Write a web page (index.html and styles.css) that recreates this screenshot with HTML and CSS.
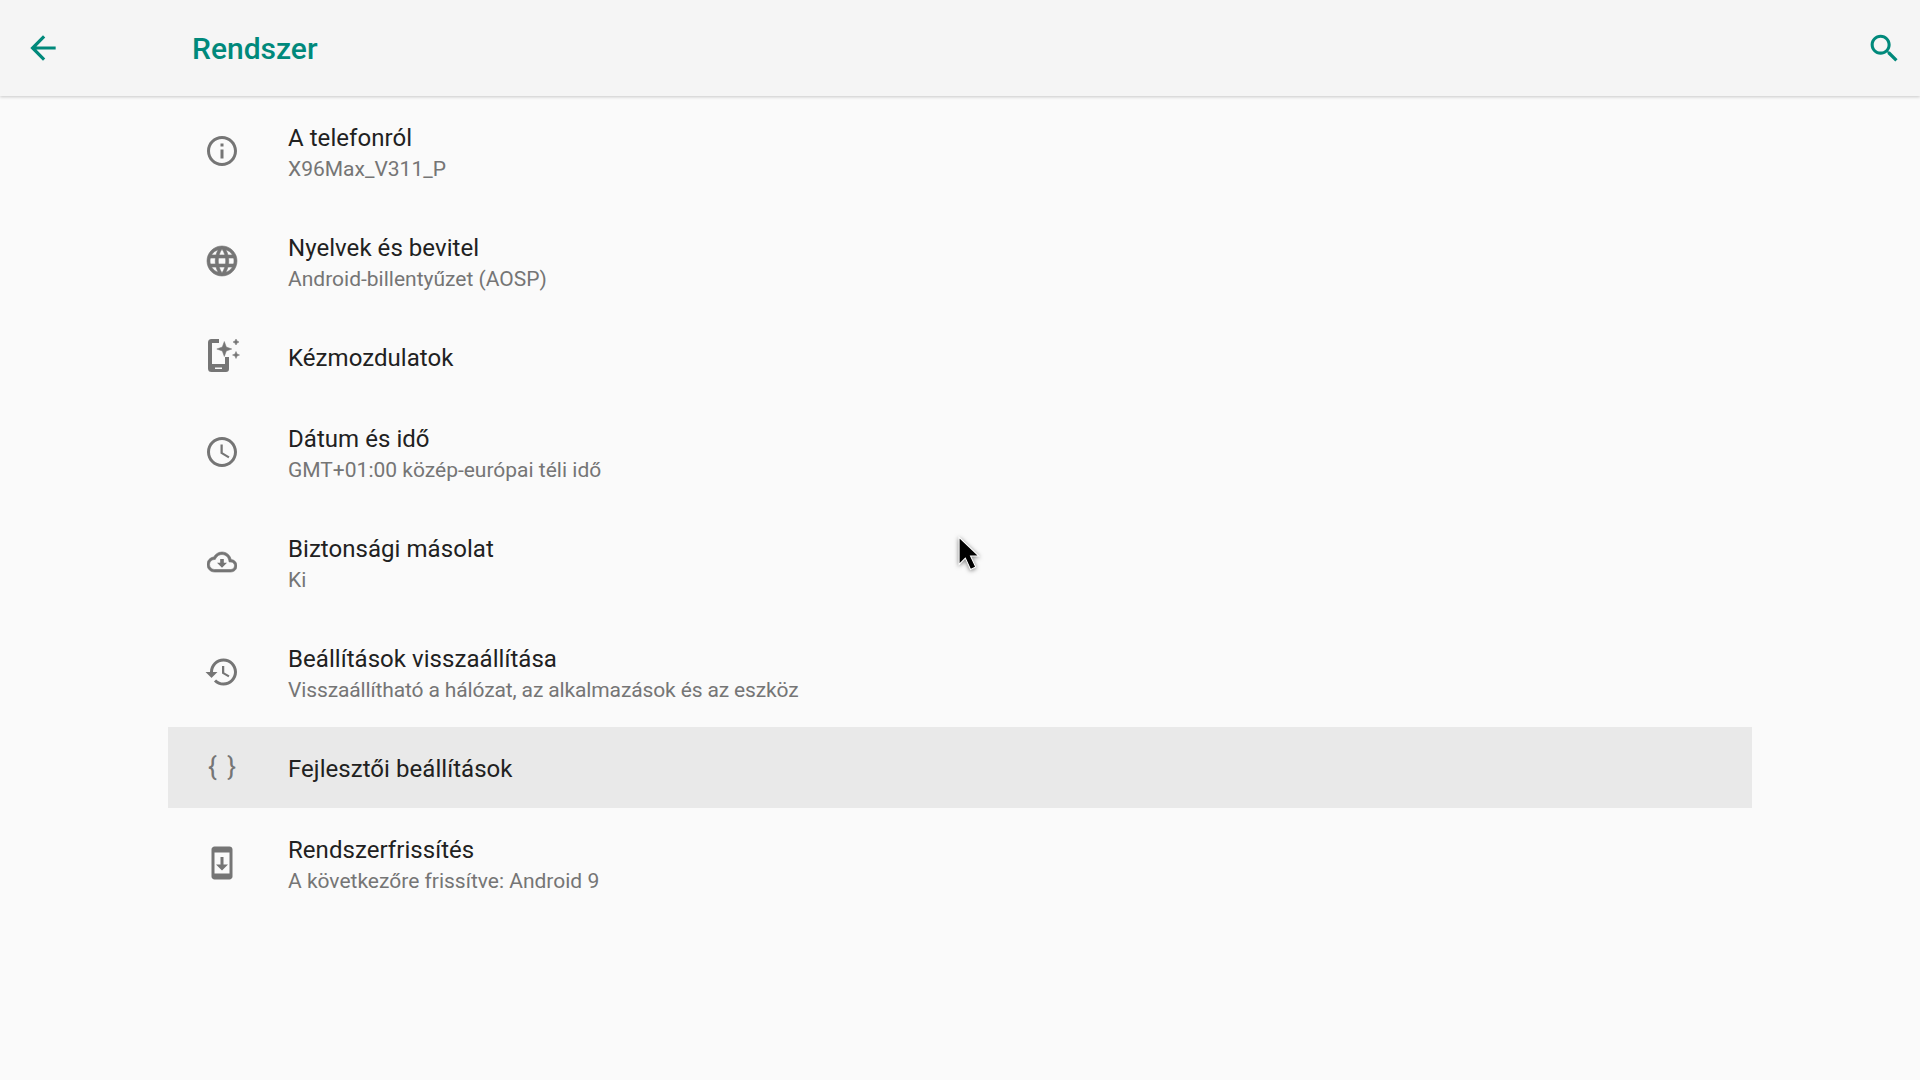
FILE: index.html
```html
<!doctype html>
<html>
    <head>
        <title>Rendszer</title>
        <meta charset="UTF-8">
        <link rel="stylesheet" href="styles.css">
    </head>

    <body>
        <!--Header Start-->
        <header class="appbar">
            <svg class="back" viewBox="0 0 24 24"><path d="M20 11H7.83l5.59-5.59L12 4l-8 8 8 8 1.41-1.41L7.83 13H20v-2z"/></svg>
            <h1 class="page-title">Rendszer</h1>
            <svg class="search" viewBox="0 0 24 24"><path d="M15.5 14h-.79l-.28-.27C15.41 12.59 16 11.11 16 9.5 16 5.91 13.09 3 9.5 3S3 5.91 3 9.5 5.91 16 9.5 16c1.61 0 3.09-.59 4.23-1.57l.27.28v.79l5 4.99L20.49 19l-4.99-5zm-6 0C7.01 14 5 11.99 5 9.5S7.01 5 9.5 5 14 7.01 14 9.5 11.99 14 9.5 14z"/></svg>
        </header>
        <!--Header End-->

        <!--List Start-->
        <section class="list">
            <div class="row">
                <div class="icon">
                    <svg viewBox="0 0 24 24"><path d="M11 7h2v2h-2zm0 4h2v6h-2zm1-9C6.48 2 2 6.48 2 12s4.48 10 10 10 10-4.48 10-10S17.52 2 12 2zm0 18c-4.41 0-8-3.59-8-8s3.59-8 8-8 8 3.59 8 8-3.59 8-8 8z"/></svg>
                </div>
                <div class="text">
                    <h2 class="title">A telefonról</h2>
                    <p class="sub">X96Max_V311_P</p>
                </div>
            </div>
            <div class="row">
                <div class="icon">
                    <svg viewBox="0 0 24 24"><path d="M11.99 2C6.47 2 2 6.48 2 12s4.47 10 9.99 10C17.52 22 22 17.52 22 12S17.52 2 11.99 2zm6.93 6h-2.95c-.32-1.25-.78-2.45-1.38-3.56 1.84.63 3.37 1.91 4.33 3.56zM12 4.04c.83 1.2 1.48 2.53 1.91 3.96h-3.82c.43-1.43 1.08-2.76 1.91-3.96zM4.26 14C4.1 13.36 4 12.69 4 12s.1-1.36.26-2h3.38c-.08.66-.14 1.32-.14 2 0 .68.06 1.34.14 2H4.26zm.82 2h2.95c.32 1.25.78 2.45 1.38 3.56-1.84-.63-3.37-1.9-4.33-3.56zm2.95-8H5.08c.96-1.66 2.49-2.93 4.33-3.56C8.81 5.55 8.35 6.75 8.03 8zM12 19.96c-.83-1.2-1.48-2.53-1.91-3.96h3.82c-.43 1.43-1.08 2.76-1.91 3.96zM14.34 14H9.66c-.09-.66-.16-1.32-.16-2 0-.68.07-1.35.16-2h4.68c.09.65.16 1.32.16 2 0 .68-.07 1.34-.16 2zm.25 5.56c.6-1.11 1.06-2.31 1.38-3.56h2.95c-.96 1.65-2.49 2.93-4.33 3.56zM16.36 14c.08-.66.14-1.32.14-2 0-.68-.06-1.34-.14-2h3.38c.16.64.26 1.31.26 2s-.1 1.36-.26 2h-3.38z" stroke="#757575" stroke-width=".4"/></svg>
                </div>
                <div class="text">
                    <h2 class="title">Nyelvek és bevitel</h2>
                    <p class="sub">Android-billentyűzet (AOSP)</p>
                </div>
            </div>
            <div class="row single">
                <div class="icon">
                    <svg viewBox="0 0 36 36"><path d="M7.500 0H15v4H8v21h13V18h4v12a3 3 0 0 1-3 3H7.500a3.500 3.500 0 0 1-3.500-3.500V3.500A3.500 3.500 0 0 1 7.500 0zM11 28.500V30h7v-1.500z" fill-rule="evenodd"/><path d="M20.300 2.500l2 5.500 5.500 2-5.500 2-2 5.500-2-5.500-5.500-2 5.500-2zM32 0l1 2 2 1-2 1-1 2-1-2-2-1 2-1zM32 12.500l1 2.500 2.500 1-2.500 1-1 2.500-1-2.500-2.500-1 2.500-1z" stroke="#757575" stroke-width=".5"/></svg>
                </div>
                <div class="text">
                    <h2 class="title">Kézmozdulatok</h2>
                </div>
            </div>
            <div class="row">
                <div class="icon">
                    <svg viewBox="0 0 24 24"><path d="M11.99 2C6.47 2 2 6.48 2 12s4.47 10 9.99 10C17.52 22 22 17.52 22 12S17.52 2 11.99 2zM12 20c-4.42 0-8-3.58-8-8s3.58-8 8-8 8 3.58 8 8-3.58 8-8 8z"/><path d="M12.5 7H11v6l5.25 3.15.75-1.23-4.5-2.67z"/></svg>
                </div>
                <div class="text">
                    <h2 class="title">Dátum és idő</h2>
                    <p class="sub">GMT+01:00 közép-európai téli idő</p>
                </div>
            </div>
            <div class="row">
                <div class="icon">
                    <svg class="cloud" viewBox="0 0 24 24"><path d="M19.35 10.04C18.67 6.59 15.64 4 12 4 9.11 4 6.6 5.64 5.35 8.04 2.34 8.36 0 10.91 0 14c0 3.31 2.69 6 6 6h13c2.76 0 5-2.24 5-5 0-2.64-2.05-4.78-4.65-4.96zM19 18H6c-2.21 0-4-1.79-4-4 0-2.05 1.53-3.76 3.56-3.97l1.07-.11.5-.95C8.08 7.14 9.94 6 12 6c2.62 0 4.88 1.86 5.39 4.43l.3 1.5 1.53.11c1.56.1 2.78 1.41 2.78 2.96 0 1.65-1.35 3-3 3z" stroke="#757575" stroke-width=".5"/><path d="M16 12.500h-2.550V9.500h-2.900v3H8l4 4z"/></svg>
                </div>
                <div class="text">
                    <h2 class="title">Biztonsági másolat</h2>
                    <p class="sub">Ki</p>
                </div>
            </div>
            <div class="row">
                <div class="icon">
                    <svg viewBox="0 0 24 24"><path d="M13 3c-4.97 0-9 4.03-9 9H1l3.89 3.89.07.14L9 12H6c0-3.870 3.130-7 7-7s7 3.130 7 7-3.130 7-7 7c-1.930 0-3.680-.79-4.940-2.060l-1.420 1.420C8.270 19.990 10.510 21 13 21c4.970 0 9-4.030 9-9s-4.030-9-9-9zm-1 5v5l4.280 2.540.72-1.210-3.500-2.080V8H12z"/></svg>
                </div>
                <div class="text">
                    <h2 class="title">Beállítások visszaállítása</h2>
                    <p class="sub tight">Visszaállítható a hálózat, az alkalmazások és az eszköz</p>
                </div>
            </div>
            <div class="row single active">
                <div class="icon braces">{ }</div>
                <div class="text">
                    <h2 class="title">Fejlesztői beállítások</h2>
                </div>
            </div>
            <div class="row">
                <div class="icon">
                    <svg viewBox="0 0 24 24"><path d="M17 1.01 7 1c-1.100 0-2 .9-2 2v18c0 1.100.9 2 2 2h10c1.100 0 2-.9 2-2V3c0-1.100-.9-1.990-2-1.990zM17 19H7V5h10v14zm-1-6h-3V8h-2v5H8l4 4 4-4z"/></svg>
                </div>
                <div class="text">
                    <h2 class="title">Rendszerfrissítés</h2>
                    <p class="sub">A következőre frissítve: Android 9</p>
                </div>
            </div>
        </section>
        <!--List End-->

        <!--Mouse pointer-->
        <svg class="pointer" viewBox="0 0 24 36"><path d="M2 1v26l6-6 5 11 5-2.500-5-10.500h8z"/></svg>
    </body>
</html>
```

FILE: styles.css
```css
html, body{
    height: 100%;
}

body{
    box-sizing: border-box;
    padding: 0;
    margin: 0;
    font-family: Roboto, "Liberation Sans", sans-serif;
    background: #FAFAFA;
    overflow: hidden;
}

/* Header */
.appbar{
    display: flex;
    align-items: center;
    height: 96px;
    padding: 0 17px 0 24px;
    background: #F5F5F5;
    box-shadow: 0 1px 3px rgba(0,0,0,0.2);
    position: relative;
}

.appbar svg{
    fill: #00897B;
    flex: none;
}

.appbar .back{
    width: 38px;
    height: 38px;
}

.appbar .search{
    width: 37px;
    height: 37px;
    margin-left: auto;
}

.page-title{
    margin: 0 0 0 130px;
    font-size: 30px;
    font-weight: 500;
    color: #00897B;
}
/* Header */

/* List */
.list{
    margin: 0 168px;
}

.row{
    display: flex;
    align-items: center;
    height: 110px;
}

.row.single{
    height: 81px;
}

.row.active{
    background: #E9E9E9;
}

.row .icon{
    display: flex;
    align-items: center;
    justify-content: center;
    width: 36px;
    height: 36px;
    margin: 0 48px 0 36px;
    flex: none;
}

.row .icon svg{
    width: 36px;
    height: 36px;
    fill: #757575;
}

.row .icon .cloud{
    width: 30px;
    height: 30px;
}

.row .braces{
    margin-top: -4px;
    font-size: 26px;
    word-spacing: 4px;
    color: #757575;
    white-space: nowrap;
}

.text{
    padding-top: 4px;
}

.single .text{
    padding-top: 2px;
}

.title{
    margin: 0;
    font-size: 24px;
    font-weight: 400;
    line-height: 32px;
    letter-spacing: 0.05px;
    color: #212121;
}

.sub{
    margin: 0;
    font-size: 21px;
    line-height: 30px;
    color: #757575;
}

.sub.tight{
    letter-spacing: -0.13px;
}
/* List */

/* Mouse pointer, floats over the list */
.pointer{
    position: absolute;
    left: 957px;
    top: 536px;
    width: 25px;
    height: 38px;
    fill: #000;
    stroke: #FFF;
    stroke-width: 1;
    filter: drop-shadow(0 1px 2px rgba(0,0,0,0.5));
}
```
